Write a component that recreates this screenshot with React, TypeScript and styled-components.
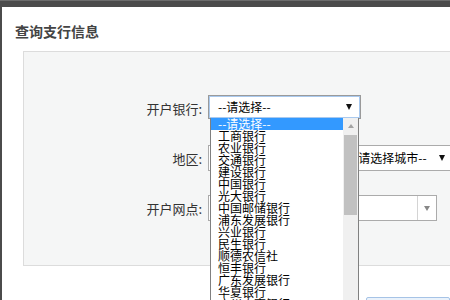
import React from "react";
import styled, { createGlobalStyle } from "styled-components";

const banks = [
  "--请选择--",
  "工商银行",
  "农业银行",
  "交通银行",
  "建设银行",
  "中国银行",
  "光大银行",
  "中国邮储银行",
  "浦东发展银行",
  "兴业银行",
  "民生银行",
  "顺德农信社",
  "恒丰银行",
  "广东发展银行",
  "华夏银行",
  "广州农商银行",
];

export default function App() {
  return (
    <>
      <GlobalStyle />
      <Dialog>
        <Header>
          <Title>查询支行信息</Title>
        </Header>
        <Panel>
          <Form>
            <Label>开户银行:</Label>
            <SelectWrap>
              <BankSelect>
                <SelectText>--请选择--</SelectText>
                <Arrow />
              </BankSelect>
              <DropList>
                <Options>
                  {banks.map((name, i) => (
                    <Option key={name} $active={i === 0}>
                      {name}
                    </Option>
                  ))}
                </Options>
                <ScrollBar>
                  <ScrollUp />
                  <Thumb />
                </ScrollBar>
              </DropList>
            </SelectWrap>

            <Label>地区:</Label>
            <Controls>
              <ProvinceSelect />
              <CitySelect>
                <SelectText>--请选择城市--</SelectText>
                <Arrow />
              </CitySelect>
            </Controls>

            <Label>开户网点:</Label>
            <Combo>
              <ComboInput />
              <ComboButton>
                <GreyArrow />
              </ComboButton>
            </Combo>
          </Form>
        </Panel>
        <Footer>
          <Button />
        </Footer>
      </Dialog>
    </>
  );
}

const GlobalStyle = createGlobalStyle`
  html, body {
    margin: 0;
    overflow: hidden;
    background: linear-gradient(#6c6c6c 0 1px, #4b4b4b 1px);
    font-family: "Microsoft YaHei", "Noto Sans CJK SC", sans-serif;
  }
`;

const Dialog = styled.div`
  margin: 7px 0 0 2px;
  width: 520px;
  height: 400px;
  background: #fff;
`;

const Header = styled.div`
  display: flex;
  align-items: center;
  height: 44px;
  padding: 4px 13px 0;
  box-sizing: border-box;
`;

const Title = styled.h1`
  margin: 0;
  font-size: 14px;
  font-weight: 700;
  color: #444;
`;

const Panel = styled.div`
  margin-left: 21px;
  padding: 43px 0 44px;
  border: 1px solid #dcdcdc;
  border-right: none;
  background: #f5f6f6;
`;

const Form = styled.div`
  display: grid;
  grid-template-columns: 178px 1fr;
  grid-auto-rows: 26px;
  column-gap: 6px;
  row-gap: 24px;
  align-items: center;
`;

const Label = styled.span`
  text-align: right;
  font-size: 13px;
  color: #333;
`;

const SelectWrap = styled.div`
  position: relative;
  align-self: start;
  height: 24px;
`;

const BaseSelect = styled.div`
  display: flex;
  align-items: center;
  box-sizing: border-box;
  height: 26px;
  background: #fff;
  border: 1px solid #ababab;
  font-size: 12px;
  color: #000;
`;

const BankSelect = styled(BaseSelect)`
  width: 153px;
  height: 24px;
  padding: 0 8px 0 9px;
  border-color: #9a9a9a;
  box-shadow: inset 0 0 0 1px #a9c9ee;
`;

const SelectText = styled.span`
  flex: 1;
  white-space: nowrap;
  line-height: 12px;
`;

const Arrow = styled.span`
  width: 0;
  height: 0;
  border-left: 3.5px solid transparent;
  border-right: 3.5px solid transparent;
  border-top: 6px solid #111;
`;

const DropList = styled.div`
  position: absolute;
  z-index: 2;
  top: 23px;
  left: 2px;
  width: 149px;
  height: 200px;
  display: flex;
  box-sizing: border-box;
  background: #fff;
  border: 1px solid #808080;
  border-top: none;
`;

const Options = styled.ul`
  flex: 1;
  margin: 0;
  padding: 0;
  list-style: none;
`;

const Option = styled.li<{ $active?: boolean }>`
  height: 12px;
  padding-left: 7px;
  font-size: 12px;
  line-height: 12px;
  white-space: nowrap;
  color: ${({ $active }) => ($active ? "#fff" : "#000")};
  background: ${({ $active }) => ($active ? "#3399ff" : "transparent")};
`;

const ScrollBar = styled.div`
  display: flex;
  flex-direction: column;
  align-items: center;
  width: 15px;
  background: #f0f0f0;
`;

const ScrollUp = styled.span`
  margin: 6px 0 7px;
  width: 0;
  height: 0;
  border-left: 3.5px solid transparent;
  border-right: 3.5px solid transparent;
  border-bottom: 4px solid #a3a3a3;
`;

const Thumb = styled.span`
  width: 13px;
  height: 80px;
  background: #c1c1c1;
`;

const Controls = styled.div`
  display: flex;
  gap: 8px;
`;

const ProvinceSelect = styled(BaseSelect)`
  width: 127px;
`;

const CitySelect = styled(BaseSelect)`
  width: 112px;
  padding: 0 9px 0 6px;
`;

const Combo = styled.div`
  display: flex;
  box-sizing: border-box;
  width: 229px;
  height: 26px;
  background: #fff;
  border: 1px solid #ababab;
`;

const ComboInput = styled.div`
  flex: 1;
`;

const ComboButton = styled.div`
  display: flex;
  align-items: center;
  justify-content: center;
  width: 18px;
  border-left: 1px solid #d4d4d4;
`;

const GreyArrow = styled.span`
  width: 0;
  height: 0;
  border-left: 3.5px solid transparent;
  border-right: 3.5px solid transparent;
  border-top: 5px solid #888;
`;

const Footer = styled.div`
  display: flex;
  padding: 31px 0 0 364px;
`;

const Button = styled.div`
  width: 84px;
  height: 28px;
  box-sizing: border-box;
  border: 1px solid #a6c3e6;
  border-radius: 2px;
  background: #eaf2fb;
`;
